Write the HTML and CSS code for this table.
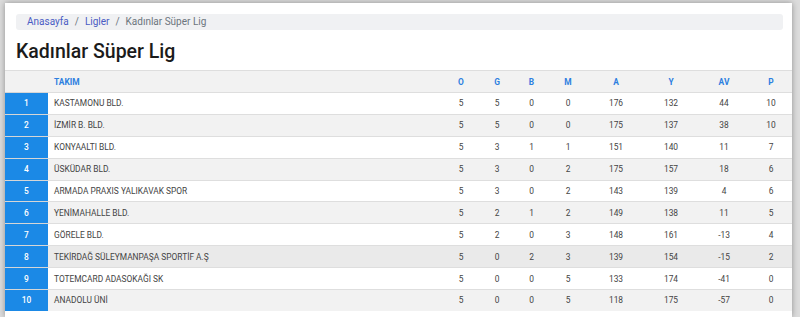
FILE: index.html
```html
<!DOCTYPE html>
<html lang="tr">
<head>
<meta charset="utf-8">
<title>Kadınlar Süper Lig</title>
<link rel="stylesheet" href="styles.css">
</head>
<body>
<div class="card">
  <nav class="crumbs">
    <a href="#">Anasayfa</a><span class="sep">/</span><a href="#">Ligler</a><span class="sep">/</span><span class="current">Kadınlar Süper Lig</span>
  </nav>
  <h1 class="title">Kadınlar Süper Lig</h1>
  <table class="standings">
    <colgroup>
      <col class="c-rank"><col class="c-team"><col class="c-o"><col class="c-g"><col class="c-b"><col class="c-m"><col class="c-a"><col class="c-y"><col class="c-av"><col class="c-p">
    </colgroup>
    <thead>
      <tr><th></th><th class="team">TAKIM</th><th>O</th><th>G</th><th>B</th><th>M</th><th>A</th><th>Y</th><th>AV</th><th>P</th></tr>
    </thead>
    <tbody>
      <tr><td class="rank">1</td><td class="team">KASTAMONU BLD.</td><td>5</td><td>5</td><td>0</td><td>0</td><td>176</td><td>132</td><td>44</td><td>10</td></tr>
      <tr><td class="rank">2</td><td class="team">İZMİR B. BLD.</td><td>5</td><td>5</td><td>0</td><td>0</td><td>175</td><td>137</td><td>38</td><td>10</td></tr>
      <tr><td class="rank">3</td><td class="team">KONYAALTI BLD.</td><td>5</td><td>3</td><td>1</td><td>1</td><td>151</td><td>140</td><td>11</td><td>7</td></tr>
      <tr><td class="rank">4</td><td class="team">ÜSKÜDAR BLD.</td><td>5</td><td>3</td><td>0</td><td>2</td><td>175</td><td>157</td><td>18</td><td>6</td></tr>
      <tr><td class="rank">5</td><td class="team">ARMADA PRAXIS YALIKAVAK SPOR</td><td>5</td><td>3</td><td>0</td><td>2</td><td>143</td><td>139</td><td>4</td><td>6</td></tr>
      <tr><td class="rank">6</td><td class="team">YENİMAHALLE BLD.</td><td>5</td><td>2</td><td>1</td><td>2</td><td>149</td><td>138</td><td>11</td><td>5</td></tr>
      <tr><td class="rank">7</td><td class="team">GÖRELE BLD.</td><td>5</td><td>2</td><td>0</td><td>3</td><td>148</td><td>161</td><td>-13</td><td>4</td></tr>
      <tr class="hover"><td class="rank">8</td><td class="team">TEKİRDAĞ SÜLEYMANPAŞA SPORTİF A.Ş</td><td>5</td><td>0</td><td>2</td><td>3</td><td>139</td><td>154</td><td>-15</td><td>2</td></tr>
      <tr><td class="rank">9</td><td class="team">TOTEMCARD ADASOKAĞI SK</td><td>5</td><td>0</td><td>0</td><td>5</td><td>133</td><td>174</td><td>-41</td><td>0</td></tr>
      <tr><td class="rank">10</td><td class="team">ANADOLU ÜNİ</td><td>5</td><td>0</td><td>0</td><td>5</td><td>118</td><td>175</td><td>-57</td><td>0</td></tr>
    </tbody>
  </table>
</div>
</body>
</html>
```

FILE: styles.css
```css
html, body {
  margin: 0;
  padding: 0;
}
body {
  background: #dcdcdc;
  padding: 3px 8px 0 5px;
  font-family: Roboto, "Liberation Sans", Arial, sans-serif;
  overflow: hidden;
  height: 317px;
  box-sizing: border-box;
}
.card {
  background: #fff;
  box-shadow: 0 0 6px rgba(0, 0, 0, 0.35);
  padding-top: 11px;
  height: 314px;
  box-sizing: border-box;
  overflow: hidden;
}
.crumbs {
  margin: 0 9px 0 11px;
  background: #f0f1f3;
  border-radius: 3px;
  height: 16px;
  line-height: 16px;
  padding-left: 11px;
  font-size: 10px;
  color: #6c757d;
}
.crumbs a {
  color: #4a5cc4;
  text-decoration: none;
}
.crumbs .sep {
  color: #6c757d;
  padding: 0 6px;
}
.title {
  margin: 0;
  padding: 10px 0 0 11px;
  height: 30px;
  font-size: 19.5px;
  line-height: 24px;
  font-weight: 500;
  color: #1b1b1b;
}
.standings {
  width: 100%;
  border-collapse: collapse;
  table-layout: fixed;
  font-size: 8.4px;
  color: #444;
}
.c-rank { width: 43px; }
.c-o { width: 36px; }
.c-g { width: 36px; }
.c-b { width: 33px; }
.c-m { width: 40px; }
.c-a { width: 56px; }
.c-y { width: 54px; }
.c-av { width: 52px; }
.c-p { width: 42px; }
.standings th {
  background: #f2f2f2;
  border-top: 1px solid #dedede;
  height: 21px;
  padding: 0;
  color: #2d7fe0;
  font-weight: 700;
  font-size: 8.4px;
  text-align: center;
}
.standings td {
  height: 20.9px;
  padding: 0;
  text-align: center;
  border-top: 1px solid #dedede;
}
.standings .team {
  text-align: left;
  padding-left: 6px;
}
.standings tbody tr:nth-child(even) td {
  background: #f2f2f2;
}
.standings tbody tr.hover td {
  background: #eaeaea;
}
.standings tbody td.rank,
.standings tbody tr:nth-child(even) td.rank,
.standings tbody tr.hover td.rank {
  background: #1b89e6;
  color: #fff;
  font-weight: 500;
  border-top: 1px solid #d6d6d6;
}
```
